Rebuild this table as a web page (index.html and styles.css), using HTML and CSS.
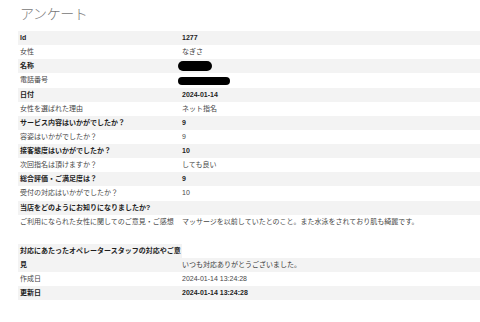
FILE: index.html
```html
<!DOCTYPE html>
<html lang="ja">
<head>
<meta charset="utf-8">
<title>アンケート</title>
<link rel="stylesheet" href="styles.css">
</head>
<body>
<div class="page">
  <h1 class="title">アンケート</h1>
  <div class="list">
    <div class="row odd"><div class="k">Id</div><div class="v">1277</div></div>
    <div class="row"><div class="k">女性</div><div class="v">なぎさ</div></div>
    <div class="row odd"><div class="k">名称</div><div class="v"><span class="redact redact-name"></span></div></div>
    <div class="row"><div class="k">電話番号</div><div class="v"><span class="redact redact-tel"></span></div></div>
    <div class="row odd"><div class="k">日付</div><div class="v">2024-01-14</div></div>
    <div class="row"><div class="k">女性を選ばれた理由</div><div class="v">ネット指名</div></div>
    <div class="row odd"><div class="k">サービス内容はいかがでしたか？</div><div class="v">9</div></div>
    <div class="row"><div class="k">容姿はいかがでしたか？</div><div class="v">9</div></div>
    <div class="row odd"><div class="k">接客態度はいかがでしたか？</div><div class="v">10</div></div>
    <div class="row"><div class="k">次回指名は頂けますか？</div><div class="v">しても良い</div></div>
    <div class="row odd"><div class="k">総合評価・ご満足度は？</div><div class="v">9</div></div>
    <div class="row"><div class="k">受付の対応はいかがでしたか？</div><div class="v">10</div></div>
    <div class="row odd"><div class="k">当店をどのようにお知りになりましたか?</div><div class="v"></div></div>
    <div class="row"><div class="k">ご利用になられた女性に関してのご意見・ご感想</div><div class="v">マッサージを以前していたとのこと。また水泳をされており肌も綺麗です。</div></div>
    <div class="row odd tall"><div class="k">対応にあたったオペレータースタッフの対応やご意見</div><div class="v">いつも対応ありがとうございました。</div></div>
    <div class="row"><div class="k">作成日</div><div class="v">2024-01-14 13:24:28</div></div>
    <div class="row odd"><div class="k">更新日</div><div class="v">2024-01-14 13:24:28</div></div>
  </div>
</div>
</body>
</html>
```
FILE: styles.css
```css
html, body {
  margin: 0;
  padding: 0;
  background: #ffffff;
}

body {
  font-family: "Liberation Sans", "Noto Sans CJK JP", sans-serif;
  font-size: 7px;
  color: #474747;
  overflow: hidden;
}

.page {
  padding-left: 18px;
}

.title {
  margin: 0 0 5px 2px;
  height: 26px;
  line-height: 26px;
  font-family: "Noto Sans CJK JP", sans-serif;
  font-size: 14px;
  font-weight: 300;
  color: #777777;
  letter-spacing: -0.4px;
}

.list {
  display: flex;
  flex-direction: column;
}

.row {
  display: flex;
  align-items: center;
  height: 14.14px;
  line-height: 14.14px;
  white-space: nowrap;
}

.row.odd {
  background: #f3f3f3;
  font-weight: bold;
  color: #1e1e1e;
}

.k {
  box-sizing: border-box;
  width: 164px;
  flex: none;
  padding-left: 2px;
}

.v {
  flex: 1;
}

.row.tall {
  height: auto;
  margin-top: 15px;
  align-items: flex-end;
  background: transparent;
  white-space: normal;
}

.row.tall .k {
  background: #f3f3f3;
  line-height: 14px;
}

.row.tall .v {
  background: #f3f3f3;
  line-height: 14px;
  font-weight: normal;
  color: #3a3a3a;
}

.redact {
  display: inline-block;
  background: #000000;
  vertical-align: middle;
  margin-left: -4px;
}

.redact-name {
  width: 34px;
  height: 10px;
  border-radius: 5px;
}

.redact-tel {
  width: 52px;
  height: 8px;
  border-radius: 4px;
}
```
